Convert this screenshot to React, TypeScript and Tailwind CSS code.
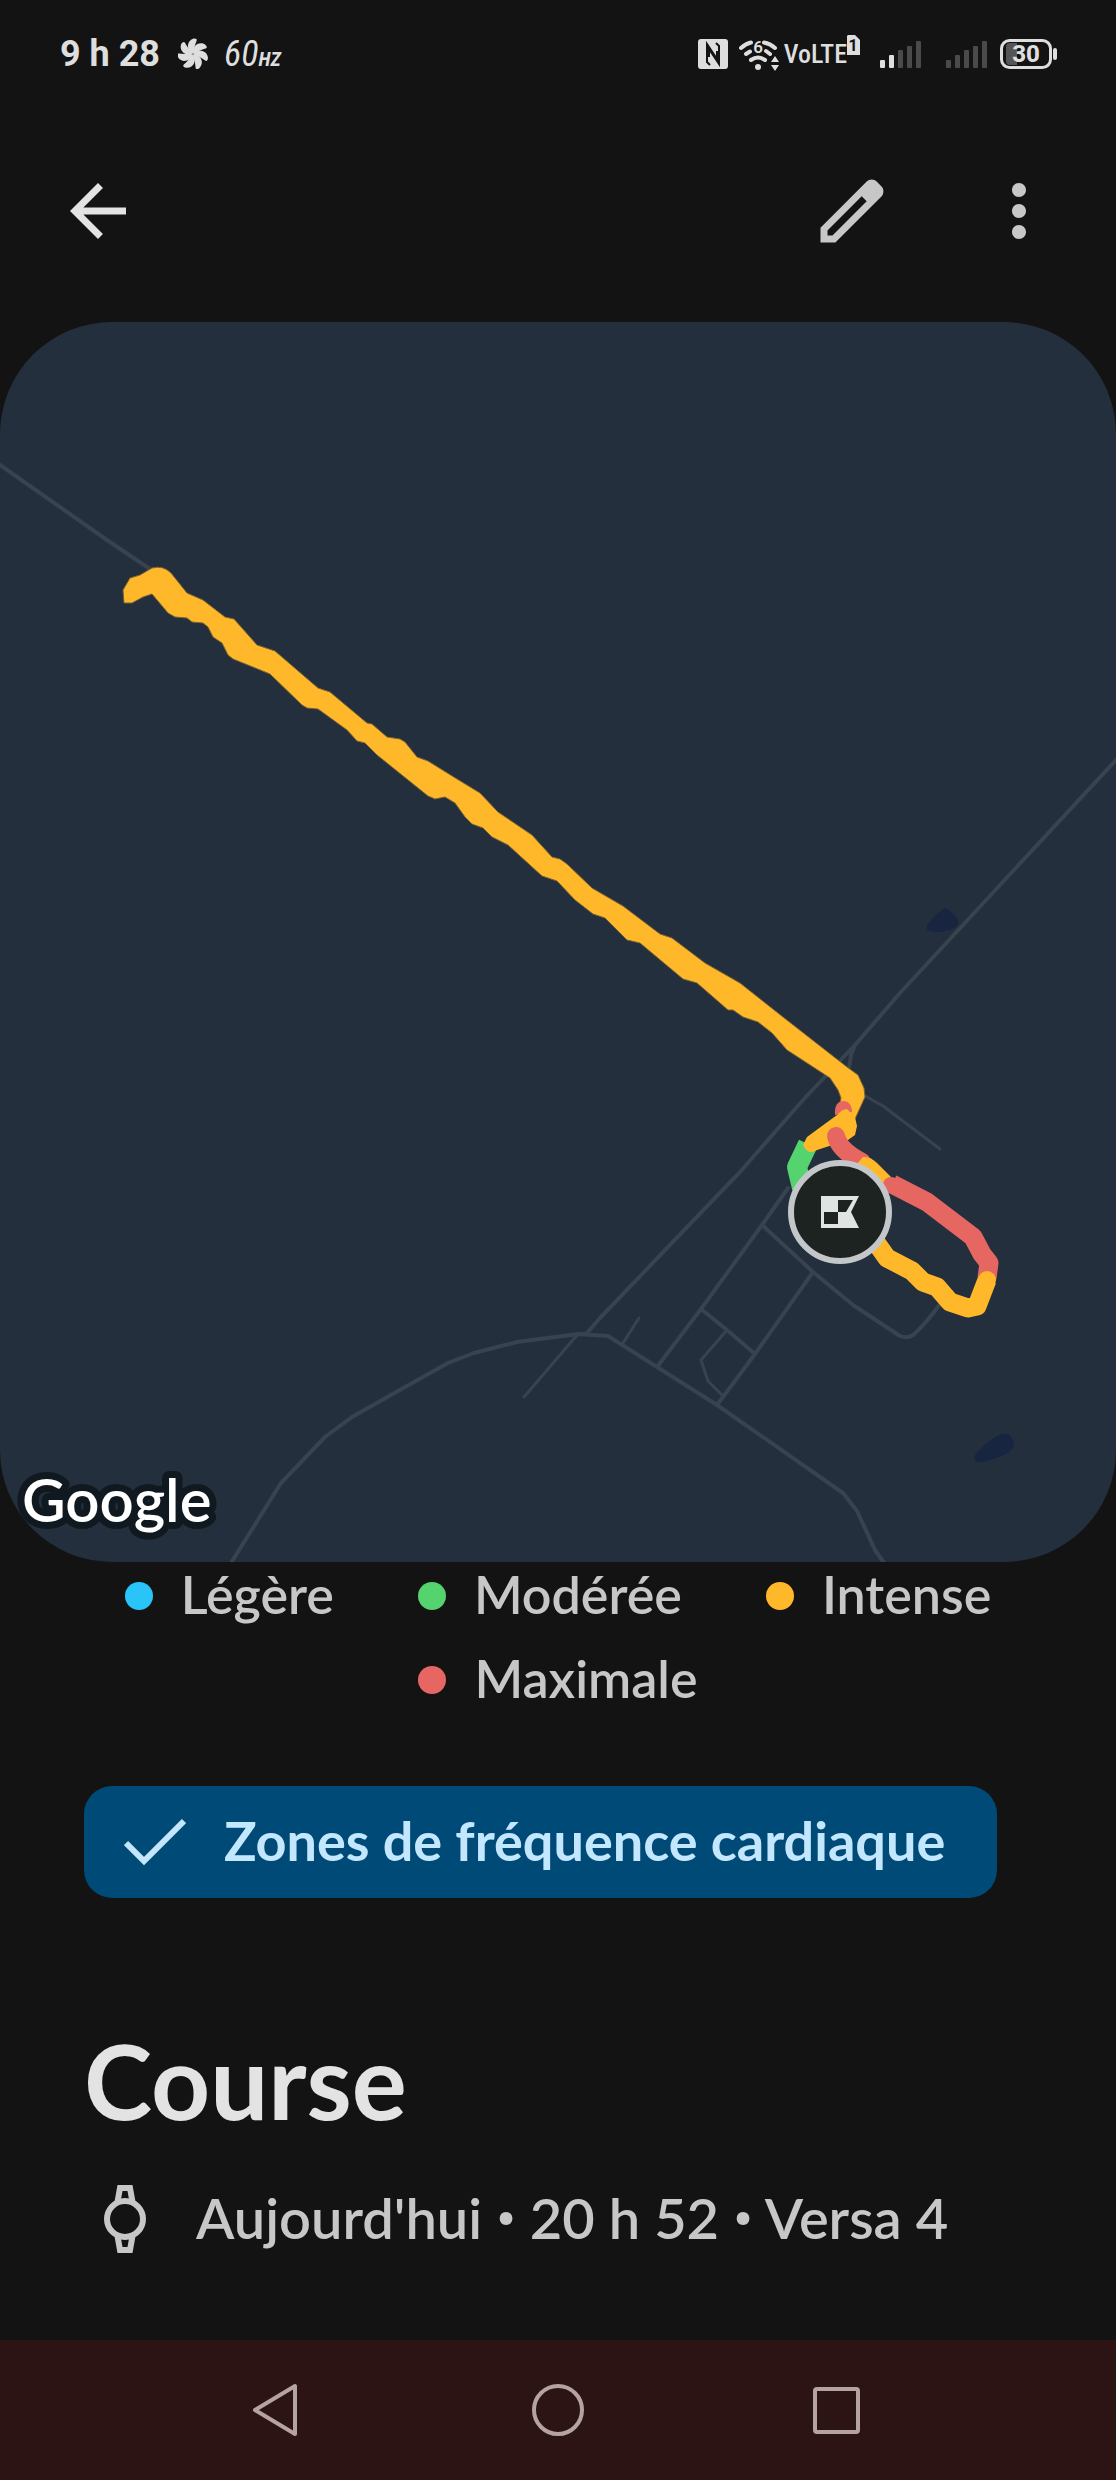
import React, { useState } from 'react';
import { MdArrowBack, MdMoreVert } from 'react-icons/md';

const zones = [
  { label: 'Légère', dot: 'bg-[#29c5f9]' },
  { label: 'Modérée', dot: 'bg-[#54d36e]' },
  { label: 'Intense', dot: 'bg-[#ffb829]' },
  { label: 'Maximale', dot: 'bg-[#e66762]' },
];

const FanIcon = () => (
  <svg viewBox="0 0 30 32" className="w-[30px] h-8" fill="#dedede" aria-hidden="true">
    {[0, 51, 103, 154, 206, 257, 309].map((angle) => (
      <path
        key={angle}
        transform={`rotate(${angle} 15 16)`}
        d="M14.500 16C8.500 12 8 3 15.500 0.500C18 0.300 19.500 1 18.500 3C17.500 6 16.500 8 16 12Z"
      />
    ))}
  </svg>
);

const NfcIcon = () => (
  <svg viewBox="0 0 30 30" className="w-[30px] h-[30px]" aria-hidden="true">
    <rect width="30" height="30" rx="3" fill="#dedede" />
    <path d="M12 26L9 23V5L19 20V12M18 4L21 7V25L11 10V18" fill="none" stroke="#131313" strokeWidth="2" />
  </svg>
);

const WifiIcon = () => (
  <svg viewBox="0 0 42 34" className="w-[42px] h-[34px]" aria-hidden="true">
    <g fill="none" stroke="#dedede" strokeWidth="4" strokeLinecap="round">
      <path d="M3 11Q8 6.500 13 5.500M26 5.500Q32 6.500 37 11" />
      <path d="M8 17L12 14.500M28 14L32 17" />
      <path d="M13 23Q20 18 27 23" />
    </g>
    <circle cx="20" cy="30" r="3" fill="#dedede" />
    <path d="M33 25L37 19L41 25ZM33 28L37 34L41 28Z" fill="#dedede" />
    <text x="20" y="16" textAnchor="middle" fontSize="17" fontWeight="600" fontFamily="Roboto, sans-serif" fill="#dedede">6</text>
  </svg>
);

const SimBadge = () => (
  <svg viewBox="0 0 13 20" className="w-[13px] h-5 mt-[-18px]" aria-hidden="true">
    <path d="M1 0H8L13 5V20H0V1Z" fill="#dedede" />
    <text x="6" y="16" textAnchor="middle" fontSize="16" fontWeight="700" fontFamily="Roboto, sans-serif" fill="#131313">1</text>
  </svg>
);

const SignalIcon = ({ level }: { level: number }) => (
  <svg viewBox="0 0 42 28" className="w-[42px] h-7" aria-hidden="true">
    {[8, 13, 18, 22, 27].map((height, i) => (
      <rect key={height} x={i * 9} y={28 - height} width="5" height={height} rx="1" fill={i < level ? '#dedede' : '#4a4a4a'} />
    ))}
  </svg>
);

const BatteryIcon = () => (
  <svg viewBox="0 0 57 30" className="w-[57px] h-[30px]" role="img" aria-label="Batterie 30 %">
    <rect x="1.500" y="1.500" width="49" height="27" rx="8" fill="none" stroke="#dedede" strokeWidth="3" />
    <path d="M10 4H17V26H10Q6 26 6 22V8Q6 4 10 4Z" fill="#555" />
    <rect x="53" y="9" width="4" height="12" rx="2" fill="#dedede" />
    <text x="26" y="23" textAnchor="middle" fontSize="24" fontWeight="800" fontFamily="Roboto, sans-serif" fill="#dedede">30</text>
  </svg>
);

const PencilIcon = () => (
  <svg viewBox="0 0 24 24" className="w-[84px] h-[84px]" fill="currentColor" aria-hidden="true">
    <path d="M5 19h1.425L16.2 9.225 14.775 7.8 5 17.575V19Zm-2 2v-4.25L16.2 3.575c.2-.183.42-.325.663-.425a2.06 2.06 0 0 1 .762-.15c.267 0 .525.05.775.15.25.1.467.25.65.45L20.425 5c.2.183.346.4.438.65a2.2 2.2 0 0 1 0 1.512 1.87 1.87 0 0 1-.438.663L7.25 21H3Z" />
  </svg>
);

const WatchIcon = () => (
  <svg viewBox="0 0 42 68" className="w-[42px] h-[68px]" fill="none" stroke="#c7c7c7" strokeWidth="6" aria-hidden="true">
    <circle cx="21" cy="34" r="18" />
    <path d="M13.500 17L16 3H26L28.500 17M13.500 51L16 65H26L28.500 51" />
  </svg>
);

const StatusBar = () => (
  <div className="h-[108px] pl-[60px] pr-[59px] flex items-center justify-between font-[Roboto,sans-serif] text-[#dedede]">
    <div className="flex items-center">
      <span className="text-4xl font-bold">9 h 28</span>
      <span className="ml-[18px]"><FanIcon /></span>
      <span className="ml-4 flex items-baseline italic font-['Roboto_Condensed',Roboto,sans-serif]">
        <span className="text-4xl">60</span>
        <span className="text-xl font-bold">HZ</span>
      </span>
    </div>
    <div className="flex items-center">
      <NfcIcon />
      <span className="ml-2.5"><WifiIcon /></span>
      <span className="ml-1 flex items-center font-['Roboto_Condensed',Roboto,sans-serif]">
        <span className="text-[26px] font-medium">VoLTE</span>
        <SimBadge />
      </span>
      <span className="ml-5"><SignalIcon level={2} /></span>
      <span className="ml-6"><SignalIcon level={0} /></span>
      <span className="ml-3"><BatteryIcon /></span>
    </div>
  </div>
);

const RouteMap = () => (
  <svg viewBox="0 0 1116 1240" className="block w-full rounded-[112px] bg-[#232f3c]" role="img" aria-label="Carte du parcours">
    {/* ponds */}
    <g fill="#182540">
      <path d="M927 603Q934 594 944 586Q952 588 958 598Q960 604 950 608Q935 612 927 608Z" />
      <path d="M975 1133Q984 1122 995 1115Q1002 1111 1008 1112Q1016 1118 1013 1126Q1008 1132 996 1136Q984 1141 978 1140Q973 1138 975 1133Z" />
    </g>

    {/* roads */}
    <g fill="none" stroke="#38434f" strokeWidth="4" strokeLinejoin="round" strokeLinecap="round">
      <path d="M0 143L107 218L150 247" />
      <path d="M1116 438L1000 563L900 671L855 723L803 778L740 850L713 878L600 996L587 1011" />
      <path d="M231 1241L281 1161L325 1115L352 1095L398 1069L448 1041L474 1031L517 1020L578 1012L608 1014L657 1045L717 1083L843 1171L857 1189L875 1228L884 1241" />
      <path d="M587 1011L578 1012L524 1075" strokeWidth="3" />
      <path d="M855 723L851 733L849 746" />
      <path d="M860 771L883 784L940 827" strokeWidth="3" />
      <path d="M657 1045L701 987L762 903L788 866" />
      <path d="M762 903L813 950L853 983L900 1014Q907 1017 913 1013Q924 1004 940 982" />
      <path d="M813 950L755 1032L717 1083" />
      <path d="M701 987L727 1008L755 1032" />
      <path d="M727 1008L701 1038L708 1059L722 1073" strokeWidth="3" />
      <path d="M639 996L623 1021" strokeWidth="3" />
    </g>

    {/* route, coloured by heart rate zone */}
    <g fill="none" strokeLinejoin="round">
      <path d="M808 822L797 845L802 866" stroke="#54d36e" strokeWidth="20" />
      <path
        d="M123 268L130 256L140 253L152 246Q163 243 171 251L187 271L203 278L225 295L234 297L257 323L275 329L318 366L330 370L367 401L372 402L387 415L400 417L405 420L417 435L428 439L457 457L480 471L498 490L532 513L552 535L560 537L567 542L592 566L623 584L660 612L672 616L705 641L740 661L783 695L847 745L858 753L864 766L865 775L855 797L838 790L841 776L838 768L830 756L787 728L772 711L758 700L743 695L733 688L728 688L697 661L683 657L640 621L627 618L605 596L593 592L575 578L557 559L542 554L508 523L492 515L483 506L472 502L465 495L455 481L445 475L435 477L428 474L377 433L365 421L357 419L347 408L318 387L307 386L302 383L270 352L233 337L228 333L222 321L213 315L208 305L203 301L192 300L187 296L175 295L168 291L152 272L143 275L132 281L124 281Z"
        fill="#ffb829"
        stroke="#7a6334"
        strokeWidth="1"
      />
      <path d="M835 793Q834 779 844 779Q852 780 852 790Z" fill="#e66762" />
      <path d="M807 815L837 793Q842 787 847 787L855 795L857 804L855 813L848 818L817 828Q808 834 803 823Z" fill="#ffb829" />
      <path d="M836 814Q839 828 862 840" stroke="#e66762" strokeWidth="18" strokeLinecap="round" />
      <path d="M863 835Q870 834 877 841L891 855L880 866L856 843Z" fill="#ffb829" />
      <path d="M892 862L927 880L973 915L982 932L989 941L987 956" stroke="#e66762" strokeWidth="19" />
      <circle cx="891" cy="863" r="8" fill="#e66762" />
      <path d="M870 912L887 936L912 949L923 960L937 965L950 980L968 986L977 984L987 958" stroke="#ffb829" strokeWidth="19" />
      <circle cx="987" cy="958" r="9" fill="#ffb829" />
    </g>

    {/* finish marker */}
    <circle cx="840" cy="890" r="49" fill="#1c2321" stroke="#c4c7c9" strokeWidth="6" />
    <path d="M821 874H859L851 890L859 906H821Z" fill="#dfe3e2" />
    <path d="M838 878H853L846 890H838ZM824 890H838V902H824Z" fill="#1c2321" />

    <text
      x="22"
      y="1200"
      fontFamily="Lato, sans-serif"
      fontSize="60"
      fontWeight="600"
      fill="#fff"
      stroke="#101820"
      strokeWidth="14"
      strokeLinejoin="round"
      paintOrder="stroke"
    >
      Google
    </text>
  </svg>
);

const NavBar = () => (
  <nav className="mt-auto h-[140px] flex items-center justify-center bg-[#2c1414]">
    <button type="button" aria-label="Retour" className="w-1/4 flex justify-center">
      <svg viewBox="0 0 54 54" className="w-[54px] h-[54px]" fill="none" stroke="#b5a3a3" strokeWidth="4" strokeLinejoin="round">
        <path d="M3 27L43 3V51Z" />
      </svg>
    </button>
    <button type="button" aria-label="Accueil" className="w-1/4 flex justify-center">
      <svg viewBox="0 0 54 54" className="w-[54px] h-[54px]" fill="none" stroke="#b5a3a3" strokeWidth="4">
        <circle cx="27" cy="27" r="24" />
      </svg>
    </button>
    <button type="button" aria-label="Applications récentes" className="w-1/4 flex justify-center">
      <svg viewBox="0 0 54 54" className="w-[54px] h-[54px]" fill="none" stroke="#b5a3a3" strokeWidth="4">
        <rect x="5" y="6" width="43" height="43" rx="2" />
      </svg>
    </button>
  </nav>
);

const Bullet = () => <span className="font-[Roboto,sans-serif]">•</span>;

const App: React.FC = () => {
  const [showZones, setShowZones] = useState(true);

  return (
    <div className="min-h-screen flex flex-col bg-[#131313] font-[Lato,sans-serif]">
      <StatusBar />

      <header className="h-[206px] mb-2 pl-14 pr-[55px] flex items-center justify-between">
        <button type="button" aria-label="Retour" className="text-[#e3e3e3]">
          <MdArrowBack className="w-[84px] h-[84px]" />
        </button>
        <div className="flex gap-[83px] text-[#c7c7c7]">
          <button type="button" aria-label="Modifier"><PencilIcon /></button>
          <button type="button" aria-label="Plus d'options"><MdMoreVert className="w-[84px] h-[84px]" /></button>
        </div>
      </header>

      <main className="mb-16">
        <RouteMap />

        <ul className="mt-1 px-14 flex flex-wrap justify-center gap-x-[84px] gap-y-6">
          {zones.map((zone) => (
            <li key={zone.label} className="flex items-center gap-7 text-[52px] leading-[60px] font-semibold text-[#c7c7c7]">
              <span className={`w-7 h-7 rounded-full ${zone.dot}`} />
              <span className="pb-1 leading-[56px]">{zone.label}</span>
            </li>
          ))}
        </ul>

        <div className="px-[84px]">
          <button
            type="button"
            aria-pressed={showZones}
            onClick={() => setShowZones(!showZones)}
            className="mt-[76px] h-28 pl-10 pr-[52px] flex items-center gap-[38px] rounded-[28px] bg-[#004a77] text-[#c2e7ff] text-[54px] font-bold"
          >
            <svg viewBox="0 0 62 48" className="w-[62px] h-12" fill="none" stroke="currentColor" strokeWidth="6" aria-hidden="true">
              <path d="M2 25L20 43L60 3" />
            </svg>
            <span className="pb-1">Zones de fréquence cardiaque</span>
          </button>

          <h1 className="mt-[122px] text-[103px] leading-[120px] font-bold text-[#e3e3e3]">Course</h1>
          <div className="mt-[38px] pl-5 flex items-center gap-[50px] text-[56px] leading-[80px] font-semibold text-[#c7c7c7]">
            <WatchIcon />
            <p>Aujourd'hui <Bullet /> 20 h 52 <Bullet /> Versa 4</p>
          </div>
        </div>
      </main>

      <NavBar />
    </div>
  );
};

export default App;
